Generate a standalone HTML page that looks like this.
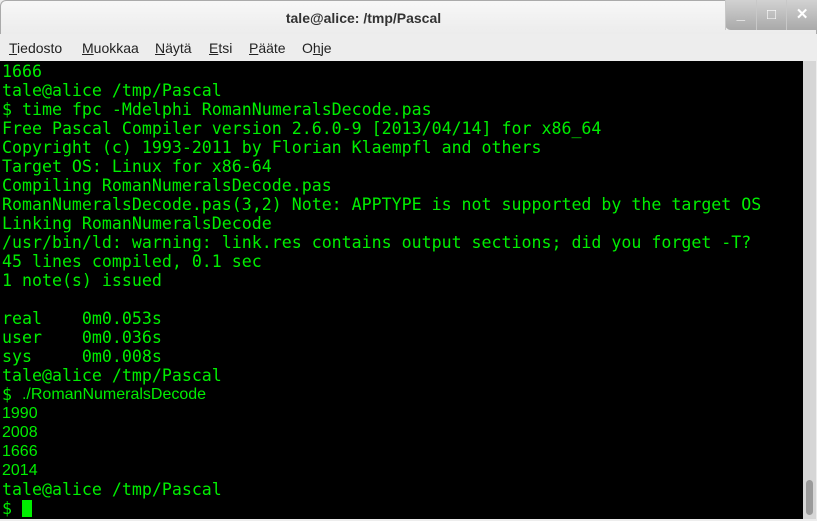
<!DOCTYPE html>
<html><head><style>
body{margin:0;width:817px;height:521px;overflow:hidden;background:#ededed;font-family:"Liberation Sans",sans-serif;position:relative}
#title{position:absolute;left:0;top:0;width:817px;height:34px;background:linear-gradient(#f7f7f7,#ececec);border-radius:6px 6px 0 0;border:1px solid #aaa;border-bottom:none;box-sizing:border-box}
#title span{position:absolute;left:0;width:725px;text-align:center;top:9px;font-weight:bold;font-size:14px;color:#333}
#btns{position:absolute;left:725px;top:0;width:92px;height:30px;background:linear-gradient(#d2d2d2,#a9a9a9);border-radius:0 0 0 6px;display:flex}
#btns div{flex:1;border-left:1px solid #c8c8c8;color:#fff;font-weight:bold;text-align:center;line-height:30px;font-size:15px}
#menu span{position:absolute;top:40px;font-size:14px;color:#222}
#term{position:absolute;left:0;top:61px;width:803px;height:458px;background:#000}
#term pre{margin:0;padding:1px 0 0 2px;font-family:"DejaVu Sans Mono",monospace;font-size:16.6px;line-height:19px;color:#00ee00}
.s{font-family:"Liberation Sans",sans-serif;font-size:16px;vertical-align:top;line-height:19px}
#sb{position:absolute;left:803px;top:61px;width:13px;height:458px;background:#d6d6d6}
#th{position:absolute;left:806px;top:480px;width:7px;height:35px;background:#9a9a9a;border-radius:4px}
#cur{display:inline-block;width:10px;height:17px;background:#00ee00;vertical-align:-3px}
</style></head><body>
<div id="title"><span>tale@alice: /tmp/Pascal</span></div>
<div id="btns"><div>_</div><div>□</div><div>✕</div></div>
<div id="menu"><span style="left:9px"><u>T</u>iedosto</span><span style="left:82px"><u>M</u>uokkaa</span><span style="left:155px"><u>N</u>äytä</span><span style="left:209px"><u>E</u>tsi</span><span style="left:249px"><u>P</u>ääte</span><span style="left:302px">O<u>h</u>je</span></div>
<div id="term"><pre>1666
tale@alice /tmp/Pascal
$ time fpc -Mdelphi RomanNumeralsDecode.pas
Free Pascal Compiler version 2.6.0-9 [2013/04/14] for x86_64
Copyright (c) 1993-2011 by Florian Klaempfl and others
Target OS: Linux for x86-64
Compiling RomanNumeralsDecode.pas
RomanNumeralsDecode.pas(3,2) Note: APPTYPE is not supported by the target OS
Linking RomanNumeralsDecode
/usr/bin/ld: warning: link.res contains output sections; did you forget -T?
45 lines compiled, 0.1 sec
1 note(s) issued

real    0m0.053s
user    0m0.036s
sys     0m0.008s
tale@alice /tmp/Pascal
$ <span class="s">./RomanNumeralsDecode</span>
<span class="s">1990</span>
<span class="s">2008</span>
<span class="s">1666</span>
<span class="s">2014</span>
tale@alice /tmp/Pascal
$ <span id="cur"></span></pre></div>
<div id="sb"></div><div id="th"></div>
</body></html>
